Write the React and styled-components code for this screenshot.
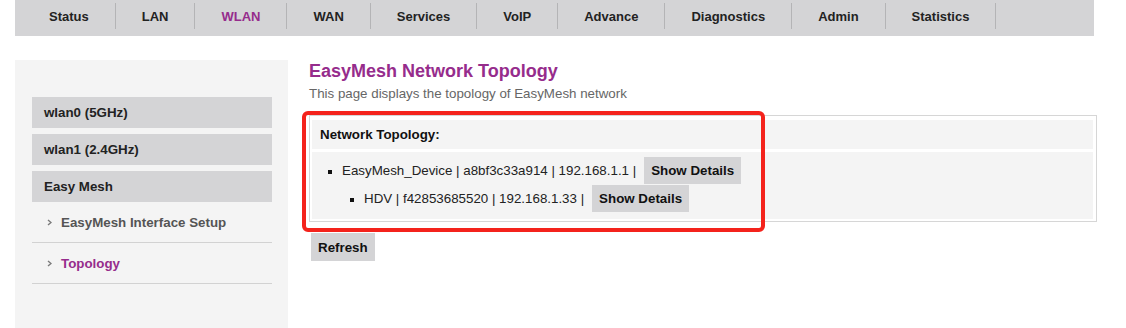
import React from "react";
import styled, { createGlobalStyle } from "styled-components";

const purple = "#962c8c";
const gray = "#d4d4d6";

const GlobalStyle = createGlobalStyle`
  body {
    margin: 0;
    background: #ffffff;
    font-family: "Liberation Sans", Arial, sans-serif;
    color: #222222;
  }
`;

const Page = styled.div`
  width: 1126px;
  height: 328px;
  overflow: hidden;
`;

const TopNav = styled.nav`
  display: flex;
  margin-left: 15px;
  width: 1079px;
  height: 36px;
  padding-left: 8px;
  box-sizing: border-box;
  background: ${gray};
`;

const NavItem = styled.div`
  height: 26px;
  margin-top: 3px;
  padding: 0 26px;
  border-right: 1px solid #b4b4b6;
  display: flex;
  align-items: center;
  font-size: 13px;
  font-weight: bold;
  color: ${(p) => (p.$active ? purple : "#222222")};
`;

const Body = styled.div`
  display: flex;
  margin-top: 24px;
`;

const Sidebar = styled.aside`
  margin-left: 15px;
  width: 273px;
  min-height: 268px;
  padding: 37px 16px 0 17px;
  box-sizing: border-box;
  background: #f4f4f4;
`;

const MenuGroup = styled.div`
  height: 31px;
  margin-bottom: ${(p) => (p.$open ? "0" : "6px")};
  padding-left: 12px;
  display: flex;
  align-items: center;
  background: ${gray};
  font-size: 10pt;
  font-weight: bold;
  color: #222222;
`;

const SubItem = styled.div`
  height: 40px;
  padding-left: 15px;
  display: flex;
  align-items: center;
  gap: 9px;
  border-bottom: 1px solid #d2d2d2;
  font-size: 10pt;
  font-weight: bold;
  color: ${(p) => (p.$active ? purple : "#555555")};
`;

const Main = styled.main`
  position: relative;
  margin-left: 21px;
  width: 788px;
`;

const Title = styled.h1`
  margin: 0;
  font-size: 18px;
  line-height: 22px;
  font-weight: bold;
  color: ${purple};
`;

const Subtitle = styled.p`
  margin: 4px 0 0;
  font-size: 10pt;
  line-height: 16px;
  color: #666666;
`;

const TopologyBox = styled.section`
  margin-top: 13px;
  border: 1px solid #d6d6d6;
  padding: 4px 3px 2px 2px;
`;

const BoxHeader = styled.div`
  height: 29px;
  padding-left: 8px;
  display: flex;
  align-items: center;
  background: #f4f4f4;
  font-size: 10pt;
  font-weight: bold;
  color: #111111;
`;

const BoxContent = styled.div`
  margin-top: 3px;
  padding: 5px 0 7px;
  display: flex;
  flex-direction: column;
  gap: 1px;
  background: #f4f4f4;
`;

const DeviceRow = styled.div`
  display: flex;
  align-items: center;
  height: 27px;
  padding-left: ${(p) => (p.$level === 2 ? "38px" : "16px")};
  font-size: 10pt;
  color: #222222;
`;

const Bullet = styled.span`
  width: 4px;
  height: 4px;
  margin: 2px 10px 0 0;
  background: #111111;
`;

const Button = styled.button`
  height: ${(p) => (p.$tall ? "28px" : "27px")};
  margin-left: ${(p) => p.$gap || "0"};
  padding: 0 7px;
  border: none;
  background: ${gray};
  font-family: inherit;
  font-size: 10pt;
  font-weight: bold;
  color: #111111;
`;

const RefreshButton = styled(Button)`
  margin-top: 11px;
  margin-left: 2px;
`;

const Highlight = styled.div`
  position: absolute;
  left: -7px;
  top: 51px;
  width: 463px;
  height: 121px;
  box-sizing: border-box;
  border: 4px solid #f4231c;
  border-radius: 6px;
  pointer-events: none;
`;

const Chevron = () => (
  <svg width="5" height="7" viewBox="0 0 5 7">
    <polyline points="1,1 4,3.5 1,6" fill="none" stroke="#7a7a7a" strokeWidth="1.4" />
  </svg>
);

const navItems = ["Status", "LAN", "WLAN", "WAN", "Services", "VoIP", "Advance", "Diagnostics", "Admin", "Statistics"];

const devices = [
  { level: 1, text: "EasyMesh_Device | a8bf3c33a914 | 192.168.1.1 |" },
  { level: 2, text: "HDV | f42853685520 | 192.168.1.33 |" },
];

export default function App() {
  return (
    <Page>
      <GlobalStyle />
      <TopNav>
        {navItems.map((item) => (
          <NavItem key={item} $active={item === "WLAN"}>
            {item}
          </NavItem>
        ))}
      </TopNav>
      <Body>
        <Sidebar>
          <MenuGroup>wlan0 (5GHz)</MenuGroup>
          <MenuGroup>wlan1 (2.4GHz)</MenuGroup>
          <MenuGroup $open>Easy Mesh</MenuGroup>
          <SubItem>
            <Chevron />
            EasyMesh Interface Setup
          </SubItem>
          <SubItem $active>
            <Chevron />
            Topology
          </SubItem>
        </Sidebar>
        <Main>
          <Title>EasyMesh Network Topology</Title>
          <Subtitle>This page displays the topology of EasyMesh network</Subtitle>
          <TopologyBox>
            <BoxHeader>Network Topology:</BoxHeader>
            <BoxContent>
              {devices.map((d) => (
                <DeviceRow key={d.text} $level={d.level}>
                  <Bullet />
                  {d.text}
                  <Button $gap="8px">Show Details</Button>
                </DeviceRow>
              ))}
            </BoxContent>
          </TopologyBox>
          <RefreshButton $tall>Refresh</RefreshButton>
          <Highlight />
        </Main>
      </Body>
    </Page>
  );
}
